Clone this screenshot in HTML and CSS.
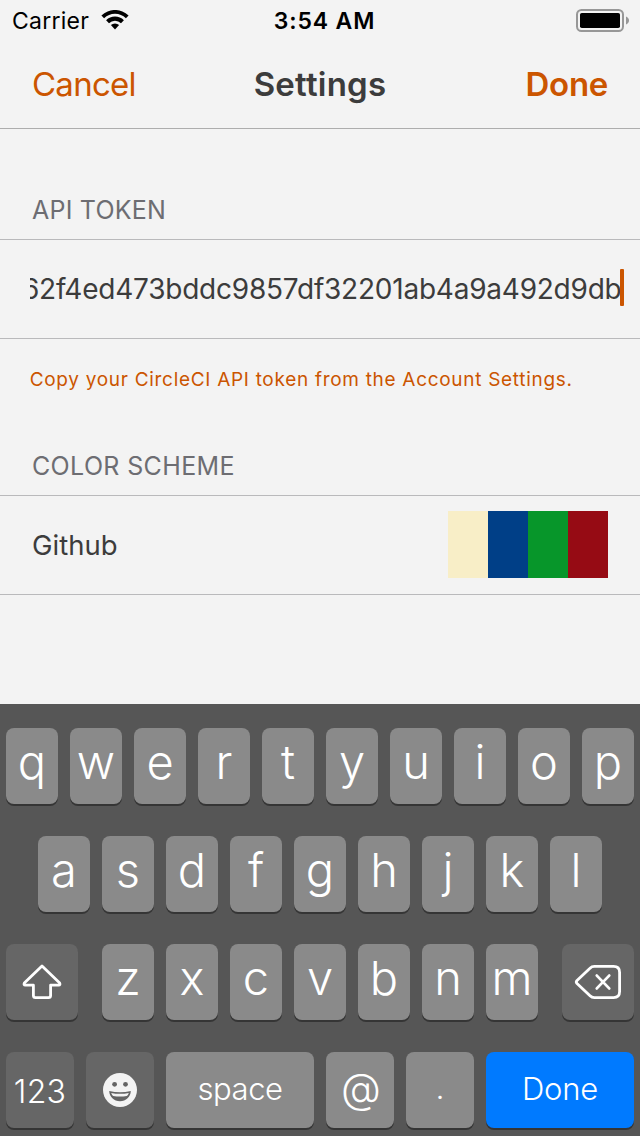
FILE: index.html
```
<!DOCTYPE html>
<html lang="en">
<head>
<meta charset="utf-8">
<title>Settings</title>
<link rel="stylesheet" href="styles.css">
</head>
<body>
<div class="screen">
  <header class="status">
    <div class="carrier">
      <span class="carrier-name">Carrier</span>
      <svg class="wifi" width="28" height="20" viewBox="0 0 28 20">
        <path d="M0.4 5.6A19.2 19.2 0 0 1 27.6 5.6L24.9 8.3A15.3 15.3 0 0 0 3.1 8.3Z"/>
        <path d="M5.1 10.3A12.6 12.6 0 0 1 22.9 10.3L20 13.2A8.4 8.4 0 0 0 8 13.2Z"/>
        <path d="M9.9 15.1A5.8 5.8 0 0 1 18.1 15.1L14 19.4Z"/>
      </svg>
    </div>
    <span class="clock">3:54 AM</span>
    <svg class="battery" width="54" height="24" viewBox="0 0 54 24">
      <rect x="1" y="1" width="46" height="21" rx="4.5" fill="none" stroke="#979797" stroke-width="2"/>
      <rect x="4" y="4" width="40" height="15" rx="1.8"/>
      <path d="M50 7.5C52 8.3 53 9.8 53 11.5C53 13.2 52 14.7 50 15.5Z" fill="#979797"/>
    </svg>
  </header>

  <nav class="navbar">
    <span class="cancel">Cancel</span>
    <span class="title">Settings</span>
    <span class="done">Done</span>
  </nav>

  <main class="form">
    <h2 class="heading">API TOKEN</h2>
    <div class="cell token-cell">
      <div class="token-field">
        <span class="token">62f4ed473bddc9857df32201ab4a9a492d9db</span>
        <span class="caret"></span>
      </div>
    </div>
    <p class="hint">Copy your CircleCI API token from the Account Settings.</p>
    <h2 class="heading scheme-heading">COLOR SCHEME</h2>
    <div class="cell scheme-cell">
      <span class="scheme-name">Github</span>
      <div class="swatches">
        <span class="swatch cream"></span>
        <span class="swatch blue"></span>
        <span class="swatch green"></span>
        <span class="swatch red"></span>
      </div>
    </div>
  </main>

  <section class="keyboard">
    <div class="row">
      <span class="key">q</span><span class="key">w</span><span class="key">e</span><span class="key">r</span><span class="key">t</span><span class="key">y</span><span class="key">u</span><span class="key">i</span><span class="key">o</span><span class="key">p</span>
    </div>
    <div class="row">
      <span class="key">a</span><span class="key">s</span><span class="key">d</span><span class="key">f</span><span class="key">g</span><span class="key">h</span><span class="key">j</span><span class="key">k</span><span class="key">l</span>
    </div>
    <div class="row spread">
      <span class="key dark shift">
        <svg width="72" height="76" viewBox="0 0 72 76" fill="none" stroke="#fff" stroke-width="2.8" stroke-linejoin="round">
          <path d="M36 22L18.3 39.1Q17.4 41 19.4 41.2H27.4V51.6Q27.4 53.7 29.5 53.7H42.5Q44.6 53.7 44.6 51.6V41.2H52.6Q54.6 41 53.7 39.1Z"/>
        </svg>
      </span>
      <div class="letters">
        <span class="key">z</span><span class="key">x</span><span class="key">c</span><span class="key">v</span><span class="key">b</span><span class="key">n</span><span class="key">m</span>
      </div>
      <span class="key dark delete">
        <svg width="72" height="76" viewBox="0 0 72 76" fill="none" stroke="#fff" stroke-width="2.8" stroke-linecap="round" stroke-linejoin="round">
          <path d="M32.4 22.4H51.6Q57.6 22.4 57.6 28.4V47.6Q57.6 53.6 51.6 53.6H32.4Q29.8 53.6 28 51.7L15 39.5Q13.6 38 15 36.5L28 24.3Q29.8 22.4 32.4 22.4Z"/>
          <path d="M34.8 31.6L47.2 44.4M47.2 31.6L34.8 44.4"/>
        </svg>
      </span>
    </div>
    <div class="row spread">
      <span class="key dark numbers">123</span>
      <span class="key dark emoji">
        <svg width="68" height="76" viewBox="0 0 68 76">
          <circle cx="34" cy="38" r="17" fill="#f3f3f3"/>
          <circle cx="28.6" cy="32.3" r="2.4" fill="#646464"/>
          <circle cx="39.5" cy="32.3" r="2.4" fill="#646464"/>
          <path d="M23.2 39Q34 41.5 44.8 39C44.6 45 40 49.2 34 49.2S23.4 45 23.2 39Z" fill="#646464"/>
          <path d="M25.2 41Q34 42.7 42.8 41Q42 43.4 40.8 44Q34 45 27.2 44Q26 43.4 25.2 41Z" fill="#f3f3f3"/>
        </svg>
      </span>
      <span class="key space">space</span>
      <span class="key at">@</span>
      <span class="key dot">.</span>
      <span class="key return">Done</span>
    </div>
  </section>
</div>
</body>
</html>
```
FILE: styles.css
```
* { box-sizing: border-box; }

body {
  margin: 0;
  font-family: Inter, "Liberation Sans", sans-serif;
  background: #f3f3f3;
  color: #3c3c3c;
}

.screen {
  display: flex;
  flex-direction: column;
  width: 640px;
  height: 1136px;
  overflow: hidden;
}

.status {
  display: grid;
  grid-template-columns: 1fr auto 1fr;
  align-items: center;
  height: 40px;
  padding: 0 10px 0 12px;
  color: #000;
  font-size: 23px;
  line-height: 38px;
}

.carrier { display: flex; align-items: center; gap: 12px; }
.carrier-name { padding-top: 2px; letter-spacing: 0.26px; }
.clock { padding: 2px 0 0 7px; font-weight: 600; letter-spacing: 0.85px; }
.battery { justify-self: end; margin-top: 2px; }

.navbar {
  display: grid;
  grid-template-columns: 1fr auto 1fr;
  height: 89px;
  padding: 0 32px 0 32px;
  border-bottom: 1px solid #adadad;
  font-size: 33px;
  line-height: 88px;
}

.cancel { color: #cb5500; letter-spacing: -0.75px; }
.title { font-weight: 600; letter-spacing: 0.23px; }
.done { justify-self: end; color: #cb5500; font-weight: 600; letter-spacing: -0.3px; }

.form { flex: 1; }

.heading {
  margin: 61px 0 0;
  padding-left: 32px;
  font-size: 25px;
  font-weight: 400;
  line-height: 41px;
  letter-spacing: 0.22px;
  color: #6d6d72;
  height: 49px;
}

.scheme-heading { margin-top: 46px; letter-spacing: 0.36px; }

.cell {
  display: flex;
  align-items: center;
  height: 100px;
  border-top: 1px solid #b9b9bb;
  border-bottom: 1px solid #b9b9bb;
}

.token-cell { padding: 0 16px 0 30px; }

.token-field {
  display: flex;
  flex: 1;
  align-items: center;
  justify-content: flex-end;
  min-width: 0;
  overflow: hidden;
  margin-top: -3px;
}

.token { padding-top: 2px; font-size: 28px; letter-spacing: -0.23px; white-space: nowrap; }

.caret {
  flex: none;
  width: 4px;
  height: 37px;
  margin-left: -1.5px;
  border-radius: 1px;
  background: #cb5500;
}

.hint {
  margin: 21px 0 0 29.7px;
  font-size: 19px;
  line-height: 40px;
  letter-spacing: 0.7px;
  color: #cb5500;
  white-space: nowrap;
}

.scheme-cell { justify-content: space-between; padding: 0 32px; }
.scheme-name { font-size: 27.5px; }
.swatches { display: flex; margin-bottom: 2px; }
.swatch { width: 40px; height: 67px; }
.cream { background: #f8eec7; }
.blue { background: #003f87; }
.green { background: #07962a; }
.red { background: #960b14; }

.keyboard {
  display: flex;
  flex-direction: column;
  gap: 32px;
  height: 432px;
  padding: 24px 6px 0;
  background: #565656;
}

.row { display: flex; justify-content: center; gap: 12px; }
.spread { justify-content: space-between; }
.letters { display: flex; gap: 12px; }

.key {
  flex: none;
  width: 52px;
  height: 76px;
  border-radius: 8px;
  background: #8a8a8a;
  box-shadow: 0 2px 0 #353535;
  color: #fff;
  font-size: 47px;
  font-weight: 300;
  line-height: 68px;
  text-align: center;
}

.key svg { display: block; }
.dark { background: #666; }
.shift, .delete { width: 72px; }
.numbers, .emoji, .at, .dot { width: 68px; }
.numbers { font-size: 32px; line-height: 80px; letter-spacing: 0.3px; }
.space { width: 148px; font-size: 31px; font-weight: 350; line-height: 73px; letter-spacing: -0.44px; }
.at { font-size: 41px; font-weight: 350; line-height: 73px; padding-left: 2px; }
.dot { font-size: 32px; line-height: 72px; }
.return {
  width: 148px;
  background: #007aff;
  font-size: 31px;
  font-weight: 350;
  line-height: 73px;
  letter-spacing: -0.26px;
}
```
